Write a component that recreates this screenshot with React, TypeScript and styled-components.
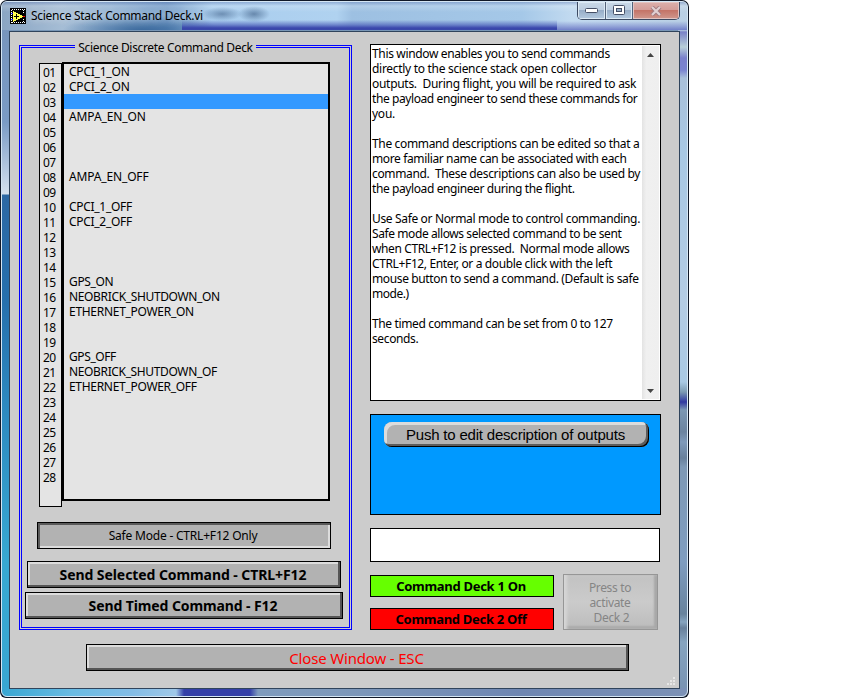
import React from "react";
import styled, { createGlobalStyle } from "styled-components";

const Global = createGlobalStyle`
  *{box-sizing:border-box}
  body{margin:0;background:#fff;font:12px/15px "Noto Sans","Open Sans",sans-serif;color:#000}
`;
const ui = '"Noto Sans","Open Sans",sans-serif';

const Win = styled.div`
  width:689px;height:698px;padding:1px;border-radius:7px 7px 6px 6px;
  background:#101828;overflow:hidden;
`;
const Glass = styled.div`
  width:687px;height:696px;border:1px solid #d5e6f4;border-radius:6px;
  display:flex;flex-direction:column;
  background:
    linear-gradient(90deg,#39a6d2 0,#6abbe3 70px,#83bce6 130px,#a0c8e8 174px,#3440a8 182px,#3440a8 248px,#7f9bbd 256px,#7d98ba 340px,#6e86b2 520px,#7b91b6 680px) 0 686px/100% 10px no-repeat,
    linear-gradient(180deg,#b5cce2 0 28px,#7a82c8 30px,#b8cfd8 45px,#7a80cc 56px,#7a84d0 68px,#a9c0da 76px,#a8c8e4 150px,#b4cce4 300px,#a9c9e4 380px,#7c9ab2 390px,#3038a0 400px,#7c98b4 408px,#6c84a0 430px,#7f9aba 440px,#68809c 456px,#7e99b6 465px,#7f9dc0 560px,#68839d 612px,#86a4c0 620px,#68809c 626px,#86a4c0 640px,#7690b0 696px) 100% 0/9px 100% no-repeat,
    linear-gradient(180deg,#8aa5c3 0,#7795bd 30px,#7a9bc5 120px,#d3e0ee 192px,#2c68a4 193px,#2670ad 300px,#2d88bf 400px,#38a8d2 560px,#39a6d2 690px) 0 0/9px 100% no-repeat,
    #7896b6;
`;
const TitleBar = styled.header`
  height:28px;display:flex;align-items:flex-start;padding:6px 0 0 8px;
  border-radius:5px 5px 0 0;
  background:
    radial-gradient(ellipse 20px 7px at 220px 12px,#33527a80,#33527a00),
    radial-gradient(ellipse 16px 8px at 252px 12px,#33527a90,#33527a00),
    linear-gradient(180deg,#6078b066 0,#ffffff33 4px,#ffffff00 10px),
    linear-gradient(180deg,#3440a800 18px,#4a5cb8aa 23px,#3a46ac 26px,#3a48aa 28px) 180px 0/375px 28px no-repeat,
    linear-gradient(180deg,#7a88cc00 19px,#7a88cc99 24px,#7280c8 28px) 555px 0/132px 28px no-repeat,
    radial-gradient(ellipse 80px 18px at 140px 30px,#2a5a90dd,#2a5a9000),
    linear-gradient(90deg,#8aa5c3 0,#a5bdd5 60px,#8eb0d2 110px,#6e98c6 165px,#8db4da 190px,#a9cdee 210px,#b0d2f0 335px,#9dc0e2 350px,#a5c8e8 520px,#c2daf0 570px,#b9cfe4 687px);
`;
const Title = styled.div`
  flex:1;margin-left:5px;font-family:${ui};line-height:15px;letter-spacing:-.29px;white-space:nowrap;
  text-shadow:0 0 7px #ffffffa0,0 0 10px #ffffff70;
`;
const Controls = styled.div`
  display:flex;margin:-6px 7px 0 0;height:18px;width:103px;
  border:1px solid #3c4a62;border-top:0;border-radius:0 0 5px 5px;overflow:hidden;
`;
const Control = styled.div<{ $w: number; $close?: boolean }>`
  width:${p => p.$w}px;height:17px;display:flex;align-items:center;justify-content:center;
  border-right:${p => (p.$close ? "0" : "1px solid #53627a")};
  box-shadow:inset 0 0 0 1px ${p => (p.$close ? "#e3c4c2" : "#dce9f4")};
  background:${p => p.$close
    ? "linear-gradient(#dcb0ac 0,#d49c98 46%,#c47468 50%,#d0988e 100%)"
    : "linear-gradient(#cad9e8 0,#bccde0 46%,#98aec8 50%,#b4cae0 100%)"};
`;
const Client = styled.main`
  margin:1px 0 0 7px;width:671px;height:658px;background:#cccccc;
  border:1px solid #30445c;display:flex;flex-direction:column;position:relative;
`;
const Columns = styled.div`display:flex;height:598px;`;
const Deck = styled.section`
  position:relative;width:333px;height:585px;margin:13px 0 0 9px;
  border:3px double #0000ff;padding:14px 0 0 0;display:flex;flex-direction:column;
`;
const Legend = styled.div`
  position:absolute;left:53px;top:-8px;width:181px;height:16px;background:#ccc;text-align:center;
  font:12px/16px ${ui};letter-spacing:-.33px;white-space:nowrap;
`;
const Lists = styled.div`display:flex;margin-left:17px;align-items:flex-start;height:446px;`;
const Numbers = styled.div`
  width:23px;height:444px;margin-top:1px;border:1px solid #000;background:#e4e4e4;
  padding:1px 0 0 3px;
`;
const Num = styled.div`height:15px;line-height:15px;letter-spacing:-.5px;`;
const List = styled.div`width:268px;height:439px;border:2px solid #000;background:#e4e4e4;`;
const Row = styled.div<{ $sel?: boolean; $ls?: number }>`
  height:15px;line-height:15px;padding-left:5px;white-space:nowrap;
  letter-spacing:${p => p.$ls ?? 0}px;
  background:${p => (p.$sel ? "#3399ff" : "transparent")};
`;
const Bevel = styled.button<{ $w: number; $mt: number; $ml: number; $down?: boolean; $size?: number; $bold?: boolean; $color?: string; $ls?: number; $lh?: number }>`
  display:block;flex:none;width:${p => p.$w}px;height:27px;margin:${p => p.$mt}px 0 0 ${p => p.$ml}px;padding:0 2px 0 0;
  border:1px solid #000;background:#b2b2b2;
  box-shadow:${p => p.$down
    ? "inset 2px 2px 0 #5a5a5a,inset -2px -2px 0 #dcdcdc"
    : "inset -2px -2px 0 #555,inset 2px 2px 0 #dcdcdc"};
  font:${p => (p.$bold ? 700 : 400)} ${p => p.$size ?? 12}px/${p => p.$lh ?? 24}px ${ui};
  color:${p => p.$color ?? "#000"};letter-spacing:${p => p.$ls ?? 0}px;text-align:center;
`;
const Side = styled.section`width:291px;margin:12px 0 0 18px;`;
const Help = styled.div`
  height:357px;border:1px solid #000;background:#fff;display:flex;justify-content:space-between;padding:1px;
`;
const HelpText = styled.div`width:270px;`;
const Line = styled.div<{ $ls?: number }>`height:15px;line-height:15px;white-space:pre;letter-spacing:${p => p.$ls ?? 0}px;`;
const Scroll = styled.div`
  flex:none;width:17px;background:linear-gradient(90deg,#e3e3e3,#f0f0f0 25%,#efefef);
  display:flex;flex-direction:column;justify-content:space-between;align-items:center;padding:7px 0 6px;
`;
const BluePanel = styled.div`
  height:101px;margin-top:13px;border:1px solid #000;background:#0099ff;padding:7px 0 0 13px;
`;
const Pill = styled.button`
  display:block;width:265px;height:25px;padding:0 2px 0 0;border:0;border-radius:8px;background:#b2b2b2;
  box-shadow:inset -1px -1px 0 #000,inset -3px -3px 0 #5c5c5c,inset 3px 3px 0 #dcdcdc;
  font:15px/25px "Liberation Sans",Arial,sans-serif;letter-spacing:-.2px;color:#000;
`;
const Field = styled.div`width:290px;height:34px;margin-top:13px;border:1px solid #000;background:#fff;`;
const Status = styled.div`display:flex;margin-top:12px;`;
const Lamps = styled.div`display:flex;flex-direction:column;gap:11px;padding-top:1px;`;
const Lamp = styled.div<{ $c: string }>`
  width:184px;height:22px;border:1px solid #000;background:${p => p.$c};
  font:700 13px/21px ${ui};text-align:center;letter-spacing:-.29px;padding-right:2px;
`;
const Press = styled.button`
  width:95px;height:56px;margin-left:9px;padding:0 1px 0 0;border:1px solid #969696;
  background:linear-gradient(#c2c2c2,#cbcbcb 50%,#bcbcbc);
  box-shadow:inset 4px 0 3px -1px #d6d6d6,inset -3px 0 2px #a8a8a8,inset 0 -3px 2px #aaa,inset 0 2px 2px #c8c8c8;
  font:12px/15px ${ui};letter-spacing:-.35px;color:#858585;text-align:center;
`;
const Grip = styled.svg`position:absolute;right:3px;bottom:2px;`;

const names: Record<number, [string, number]> = {
  1: ["CPCI_1_ON", -.22], 2: ["CPCI_2_ON", -.22], 4: ["AMPA_EN_ON", -.1], 8: ["AMPA_EN_OFF", -.15],
  10: ["CPCI_1_OFF", -.3], 11: ["CPCI_2_OFF", -.3], 15: ["GPS_ON", -.35], 16: ["NEOBRICK_SHUTDOWN_ON", -.35],
  17: ["ETHERNET_POWER_ON", -.29], 20: ["GPS_OFF", -.4], 21: ["NEOBRICK_SHUTDOWN_OF", -.36], 22: ["ETHERNET_POWER_OFF", -.3],
};
const help: [string, number][] = [
  ["This window enables you to send commands", -.35],
  ["directly to the science stack open collector", -.3],
  ["outputs.  During flight, you will be required to ask", -.29],
  ["the payload engineer to send these commands for", -.41],
  ["you.", -.25], ["", 0],
  ["The command descriptions can be edited so that a", -.35],
  ["more familiar name can be associated with each", -.37],
  ["command.  These descriptions can also be used by", -.35],
  ["the payload engineer during the flight.", -.4], ["", 0],
  ["Use Safe or Normal mode to control commanding.", -.35],
  ["Safe mode allows selected command to be sent", -.41],
  ["when CTRL+F12 is pressed.  Normal mode allows", -.38],
  ["CTRL+F12, Enter, or a double click with the left", -.37],
  ["mouse button to send a command. (Default is safe", -.37],
  ["mode.)", -.45], ["", 0],
  ["The timed command can be set from 0 to 127", -.36],
  ["seconds.", -.38],
];
const rows = Array.from({ length: 28 }, (_, i) => i + 1);

export default function App() {
  return (
    <>
      <Global />
      <Win><Glass>
        <TitleBar>
          <svg width="16" height="16" shapeRendering="crispEdges">
            <rect width="16" height="16" fill="#000" />
            <path d="M2 1.5h13M2 14.5h13" stroke="#fff" strokeDasharray="1 1" />
            <path d="M1.5 2v13M13.5 2v3M13.5 11v3" stroke="#fff" strokeDasharray="1 1" />
            <path d="M3 3L14 8.5L3 14Z" fill="#ffff50" />
            <path d="M4 8.5h5M6.5 6v5" stroke="#000" />
            <path d="M13 8.5h2" stroke="#f00" />
            <path d="M1 5.5h2M1 11.5h2" stroke="#22f" />
          </svg>
          <Title>Science Stack Command Deck.vi</Title>
          <Controls>
            <Control $w={28}><svg width="13" height="6"><rect x=".5" y=".5" width="12" height="4" rx="1" fill="#fff" stroke="#454f66" /></svg></Control>
            <Control $w={27}><svg width="13" height="11"><rect x=".5" y=".5" width="11" height="9" rx="1" fill="#fff" stroke="#454f66" /><rect x="3.5" y="3.5" width="5" height="3" fill="#9ab0c8" stroke="#454f66" /></svg></Control>
            <Control $w={46} $close><svg width="12" height="10"><path d="M2 1L10 9M10 1L2 9" stroke="#a07a80" strokeWidth="4" /><path d="M2 1L10 9M10 1L2 9" stroke="#e2d0d2" strokeWidth="2.2" /></svg></Control>
          </Controls>
        </TitleBar>
        <Client>
          <Columns>
            <Deck>
              <Legend>Science Discrete Command Deck</Legend>
              <Lists>
                <Numbers>{rows.map(n => <Num key={n}>{String(n).padStart(2, "0")}</Num>)}</Numbers>
                <List>{rows.map(n => <Row key={n} $sel={n === 3} $ls={names[n]?.[1]}>{names[n]?.[0]}</Row>)}</List>
              </Lists>
              <Bevel $w={294} $mt={14} $ml={15} $ls={-.2} $down>Safe Mode - CTRL+F12 Only</Bevel>
              <Bevel $w={314} $mt={12} $ml={5} $bold $size={14} $ls={-.08}>Send Selected Command - CTRL+F12</Bevel>
              <Bevel $w={318} $mt={4} $ml={3} $bold $size={14} $ls={-.1}>Send Timed Command - F12</Bevel>
            </Deck>
            <Side>
              <Help>
                <HelpText>{help.map(([t, ls], i) => <Line key={i} $ls={ls}>{t}</Line>)}</HelpText>
                <Scroll>
                  <svg width="7" height="4"><path d="M0 4L3.5 0L7 4Z" fill="#444" /></svg>
                  <svg width="7" height="4"><path d="M0 0L3.5 4L7 0Z" fill="#444" /></svg>
                </Scroll>
              </Help>
              <BluePanel><Pill>Push to edit description of outputs</Pill></BluePanel>
              <Field />
              <Status>
                <Lamps>
                  <Lamp $c="#66ff00">Command Deck 1 On</Lamp>
                  <Lamp $c="#ff0000">Command Deck 2 Off</Lamp>
                </Lamps>
                <Press>Press to<br />activate<br />&nbsp;Deck 2</Press>
              </Status>
            </Side>
          </Columns>
          <Bevel $w={543} $mt={14} $ml={76} $size={15} $lh={20} $ls={-.17} $color="#ff0000">Close Window - ESC</Bevel>
          <Grip width="9" height="9" shapeRendering="crispEdges">
            <path d="M6 0h2v2h-2zM3 3h2v2h-2zM6 3h2v2h-2zM0 6h2v2h-2zM3 6h2v2h-2zM6 6h2v2h-2z" fill="#e6e6e6" />
          </Grip>
        </Client>
      </Glass></Win>
    </>
  );
}
